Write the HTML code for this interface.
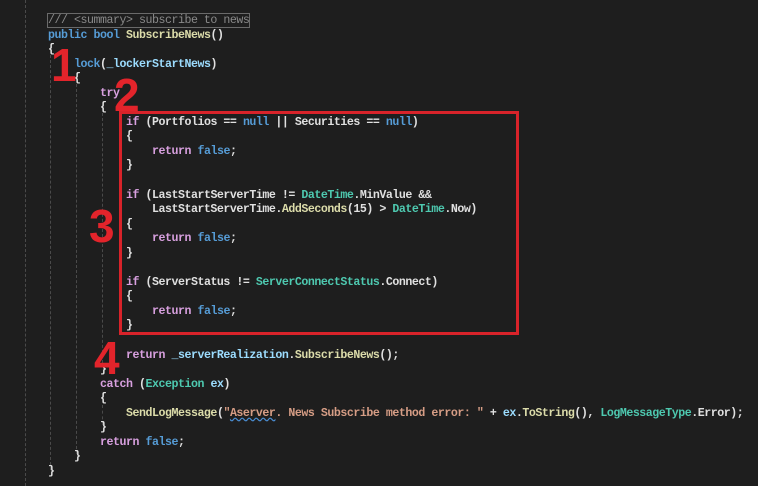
<!DOCTYPE html>
<html><head><meta charset="utf-8"><style>
html,body{margin:0;padding:0;background:#1e1e1e;width:758px;height:486px;overflow:hidden;position:relative}
pre{position:absolute;left:48px;top:14px;margin:0;font-family:"Liberation Mono","DejaVu Sans Mono",monospace;font-size:11.6px;line-height:14.55px;color:#e0e0e0;letter-spacing:-0.46px;font-weight:bold}
.k{color:#569cd6}.c{color:#d8a0df}.m{color:#dcdcaa}.t{color:#4ec9b0}.v{color:#9cdcfe}.s{color:#d69d85}
.sum{outline:1px solid #6a6a6a;color:#8a8a8a;font-weight:normal}
.gl{position:absolute;top:0;width:0;border-left:1px dashed #4a4a4a}
.box{position:absolute;left:119px;top:111px;width:394px;height:218px;border:3px solid #d8232a}
.n{position:absolute;color:#e3242b;font-family:"Liberation Sans",sans-serif;font-weight:bold;font-size:46px;line-height:1}
.sq{text-decoration:underline wavy #4a8fd6}
</style></head><body>
<div class="gl" style="left:25px;height:486px"></div>
<div class="gl" style="left:50px;top:55px;height:415px"></div>
<div class="gl" style="left:76px;top:84px;height:370px"></div>
<div class="gl" style="left:102px;top:113px;height:250px"></div>
<div class="gl" style="left:102px;top:405px;height:20px"></div>
<pre><span class="sum">/// &lt;summary&gt; subscribe to news</span>
<span class="k">public</span> <span class="k">bool</span> <span class="m">SubscribeNews</span>()
{
    <span class="k">lock</span>(<span class="v">_lockerStartNews</span>)
    {
        <span class="c">try</span>
        {
            <span class="c">if</span> (Portfolios == <span class="k">null</span> || Securities == <span class="k">null</span>)
            {
                <span class="c">return</span> <span class="k">false</span>;
            }

            <span class="c">if</span> (LastStartServerTime != <span class="t">DateTime</span>.MinValue &amp;&amp;
                LastStartServerTime.<span class="m">AddSeconds</span>(15) &gt; <span class="t">DateTime</span>.Now)
            {
                <span class="c">return</span> <span class="k">false</span>;
            }

            <span class="c">if</span> (ServerStatus != <span class="t">ServerConnectStatus</span>.Connect)
            {
                <span class="c">return</span> <span class="k">false</span>;
            }

            <span class="c">return</span> <span class="v">_serverRealization</span>.<span class="m">SubscribeNews</span>();
        }
        <span class="c">catch</span> (<span class="t">Exception</span> <span class="v">ex</span>)
        {
            <span class="m">SendLogMessage</span>(<span class="s">"<span class="sq">Aserver</span>. News Subscribe method error: "</span> + <span class="v">ex</span>.<span class="m">ToString</span>(), <span class="t">LogMessageType</span>.Error);
        }
        <span class="c">return</span> <span class="k">false</span>;
    }
}</pre>
<div class="box"></div>
<div class="n" style="left:51px;top:42px">1</div>
<div class="n" style="left:114px;top:72px">2</div>
<div class="n" style="left:89px;top:203px">3</div>
<div class="n" style="left:94px;top:335px">4</div>
</body></html>
